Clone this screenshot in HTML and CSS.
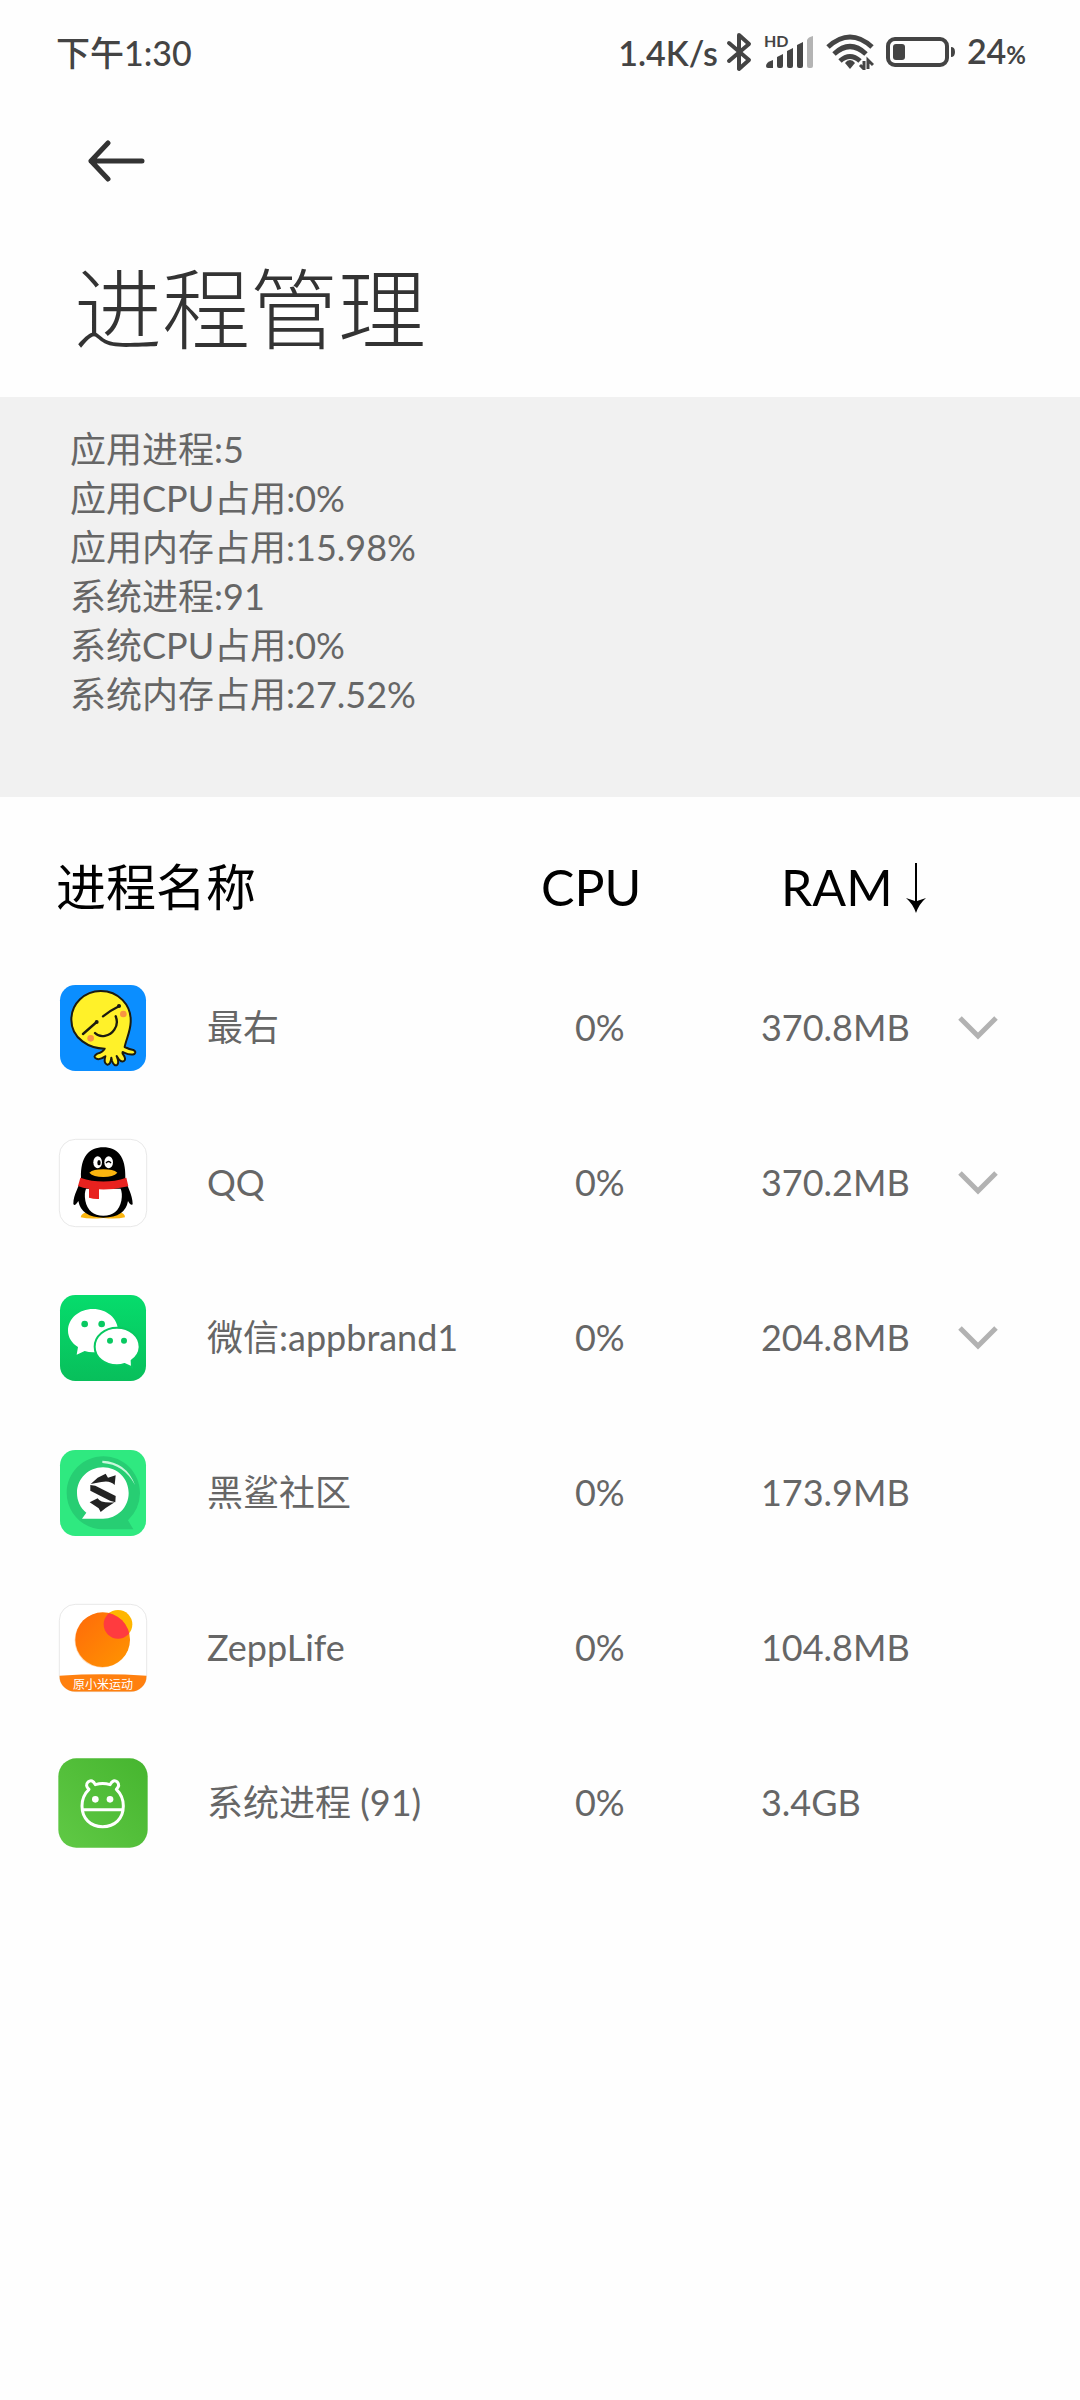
FILE: index.html
```html
<!DOCTYPE html>
<html lang="zh-CN">
<head>
    <meta charset="UTF-8">
    <meta name="viewport" content="width=device-width, initial-scale=1.0">
    <title>进程管理</title>
    <link rel="stylesheet" href="styles.css">
</head>
<body>
    <div class="status-bar">
        <span class="status-time">下午1:30</span>
        <div class="status-icons">
            <span class="net-speed">1.4K/s</span>
            <svg class="icon-bluetooth" width="26" height="40" viewBox="0 0 26 40" fill="none" stroke="#444" stroke-width="4" stroke-linejoin="round" stroke-linecap="round">
                <path d="M3 11l20 17-10 9V3l10 9L3 29"/>
            </svg>
            <svg class="icon-signal" width="50" height="46" viewBox="0 -6 50 46" fill="#444">
                <text class="hd-text" x="0" y="12">HD</text>
                <path d="M2 31q0-4 7-6v8H4q-2 0-2-2z"/>
                <path d="M13 22l6-3v12q0 2-2 2h-2q-2 0-2-2z"/>
                <path d="M23 16l6-3v18q0 2-2 2h-2q-2 0-2-2z"/>
                <path d="M33 10l6-3v24q0 2-2 2h-2q-2 0-2-2z"/>
                <path fill="#b4b4b4" d="M43 5q1-3 6-4v30q0 2-2 2h-2q-2 0-2-2z"/>
            </svg>
            <svg class="icon-wifi" width="48" height="36" viewBox="0 0 48 36" fill="none" stroke="#444" stroke-width="5">
                <path d="M2 13Q24-7 46 13M8 20q16-15 32 0M14 27q10-9 20 0"/>
                <path fill="#444" stroke="none" d="M24 26q3 0 5 3l-5 6-5-6q2-3 5-3z"/>
                <path stroke-width="3" d="M38 27v8l-4-4M42 35v-9l5 5"/>
            </svg>
            <svg class="icon-battery" width="69" height="30" viewBox="0 0 69 30">
                <rect x="2" y="2" width="59" height="26" rx="7" fill="none" stroke="#444" stroke-width="4"/>
                <rect x="7" y="7" width="12" height="16" rx="3" fill="#444"/>
                <path fill="#444" d="M65 10q4 0 4 5t-4 5z"/>
            </svg>
            <span>24<small>%</small></span>
        </div>
    </div>

    <header class="page-header">
        <button class="back-btn" type="button" aria-label="返回">
            <svg width="58" height="42" viewBox="0 0 58 42" fill="none" stroke="#333" stroke-width="5" stroke-linecap="round" stroke-linejoin="round">
                <path d="M54 21H3M20 3L3 21l17 18"/>
            </svg>
        </button>
        <h1>进程管理</h1>
    </header>

    <section class="summary">
        <p>应用进程:5</p>
        <p>应用CPU占用:0%</p>
        <p>应用内存占用:15.98%</p>
        <p>系统进程:91</p>
        <p>系统CPU占用:0%</p>
        <p>系统内存占用:27.52%</p>
    </section>

    <table class="process-table">
        <colgroup>
            <col class="col-icon">
            <col>
            <col class="col-cpu">
            <col class="col-ram">
            <col class="col-toggle">
        </colgroup>
        <thead>
            <tr>
                <th class="name-head" colspan="2">进程名称</th>
                <th>CPU</th>
                <th class="ram-head" colspan="2">
                    <button class="sort-btn" type="button">RAM
                        <svg width="22" height="50" viewBox="0 0 22 50">
                            <path d="M10 0h2v38l9-3q-7 6-10 15Q8 41 1 35l9 3z"/>
                        </svg>
                    </button>
                </th>
            </tr>
        </thead>
        <tbody>
            <tr>
                <td class="app-icon">
                    <svg width="90" height="90" viewBox="24 24 270 270">
                        <rect x="30" y="30" width="258" height="258" rx="46" fill="#0b8eff"/>
                        <g stroke="#1b1b10" stroke-width="6" stroke-linejoin="round" stroke-linecap="round" fill="#fff129">
                            <path d="M164 221C120 221 64 192 64 134C64 86 104 48 152 48C205 48 245 90 242 142C241 170 228 194 224 216Q240 224 250 225Q260 230 253 237Q242 242 222 233Q216 228 218 236Q230 253 222 258Q214 263 206 252L200 243Q208 262 202 269Q193 276 186 258L184 248Q182 270 172 269Q160 266 166 244Q148 256 139 251Q127 245 142 236Q158 231 164 221z"/>
                        </g>
                        <circle cx="122" cy="190" r="10" fill="#f79442"/>
                        <circle cx="220" cy="117" r="10" fill="#f79442"/>
                        <g fill="none" stroke="#1b1b10" stroke-width="7" stroke-linecap="round">
                            <path d="M99 177L140 141M159 124Q180 107 208 93M135 174C150 190 180 184 193 164Q206 145 197 124"/>
                        </g>
                        <circle cx="140" cy="141" r="6" fill="#1b1b10"/>
                        <circle cx="207" cy="93" r="6" fill="#1b1b10"/>
                    </svg>
                </td>
                <td>最右</td>
                <td class="cpu">0%</td>
                <td>370.8MB</td>
                <td>
                    <button class="toggle-btn" type="button" aria-label="展开最右">
                        <svg width="40" height="26" viewBox="0 0 40 26"><path d="M2 3l18 18L38 3"/></svg>
                    </button>
                </td>
            </tr>
            <tr>
                <td class="app-icon">
                    <svg width="90" height="90" viewBox="24 24 270 270">
                        <rect x="28" y="28" width="262" height="262" rx="48" fill="#fff" stroke="#dcdcdc" stroke-width="2"/>
                        <path fill="#fbb50f" d="M92 262Q94 248 115 246h90Q225 248 225 262Q200 268 160 264Q118 268 92 262z"/>
                        <path d="M93 144C91 80 118 52 160 52S228 80 226 144C229 166 248 194 248 222Q244 230 234 213Q226 262 160 263Q94 262 85 213Q73 232 70 221C70 194 88 170 93 144z"/>
                        <path fill="#fff" d="M108 176H212Q218 190 214 212Q205 256 160 257Q115 256 106 212Q102 190 108 176z"/>
                        <path fill="#e8221f" d="M91 143Q160 166 229 143L235 169Q190 180 147 178V207Q132 208 117 203V176Q98 174 84 168z"/>
                        <ellipse cx="143" cy="97" rx="13" ry="18" fill="#fff"/>
                        <ellipse cx="176" cy="97" rx="13" ry="18" fill="#fff"/>
                        <ellipse cx="147" cy="98" rx="5" ry="8"/>
                        <path d="M168 99q8-9 15 0" fill="none" stroke="#000" stroke-width="4"/>
                        <path fill="#fbb50f" d="M118 128Q130 118 160 118T202 128Q190 141 160 141T118 128z"/>
                    </svg>
                </td>
                <td>QQ</td>
                <td class="cpu">0%</td>
                <td>370.2MB</td>
                <td>
                    <button class="toggle-btn" type="button" aria-label="展开QQ">
                        <svg width="40" height="26" viewBox="0 0 40 26"><path d="M2 3l18 18L38 3"/></svg>
                    </button>
                </td>
            </tr>
            <tr>
                <td class="app-icon">
                    <svg width="90" height="90" viewBox="24 24 270 270">
                        <defs>
                            <linearGradient id="wechat" x2="0" y2="1">
                                <stop stop-color="#06dc6c"/>
                                <stop offset="1" stop-color="#08bf5b"/>
                            </linearGradient>
                        </defs>
                        <rect x="30" y="30" width="258" height="258" rx="46" fill="url(#wechat)"/>
                        <path fill="#fff" d="M129 72C171 72 204 101 204 137S171 202 129 202Q116 202 104 198L80 209L84 186C66 175 54 157 54 137C54 101 87 72 129 72z"/>
                        <path fill="#fff" stroke="#08c961" stroke-width="6" d="M201 128C239 128 269 153 269 186Q268 210 245 227L246 247L224 237Q213 241 201 241C164 241 134 217 134 185S164 128 201 128z"/>
                        <g fill="#08c961">
                            <circle cx="104" cy="117" r="10"/>
                            <circle cx="155" cy="117" r="10"/>
                            <circle cx="180" cy="167" r="9"/>
                            <circle cx="222" cy="167" r="9"/>
                        </g>
                    </svg>
                </td>
                <td>微信:appbrand1</td>
                <td class="cpu">0%</td>
                <td>204.8MB</td>
                <td>
                    <button class="toggle-btn" type="button" aria-label="展开微信">
                        <svg width="40" height="26" viewBox="0 0 40 26"><path d="M2 3l18 18L38 3"/></svg>
                    </button>
                </td>
            </tr>
            <tr>
                <td class="app-icon">
                    <svg width="90" height="90" viewBox="24 24 270 270">
                        <rect x="30" y="30" width="258" height="258" rx="46" fill="#2fe980"/>
                        <path fill="#27ce73" d="M160 49C221 49 270 98 270 159Q269 207 234 241L250 268H160C99 268 50 219 50 159S99 49 160 49z"/>
                        <path fill="#fff" d="M159 82C202 82 236 116 236 159S202 236 159 236H96L109 218C91 204 81 182 81 159C81 116 116 82 159 82z"/>
                        <path fill="#c8f8dc" d="M157 62Q229 65 255 135Q222 73 157 69z"/>
                        <g fill="#222">
                            <path d="M167 101L174 113L197 106L194 135Q180 120 154 126L122 132L143 113z"/>
                            <path d="M121 135L136 137L197 168L196 187L180 182L121 152z"/>
                            <path d="M119 187L143 175Q150 190 194 187L167 204L152 216L146 205z"/>
                        </g>
                    </svg>
                </td>
                <td>黑鲨社区</td>
                <td class="cpu">0%</td>
                <td>173.9MB</td>
                <td></td>
            </tr>
            <tr>
                <td class="app-icon">
                    <svg width="90" height="90" viewBox="24 24 270 270">
                        <defs>
                            <linearGradient id="zepp" x2="1" y2="1">
                                <stop stop-color="#ff6a0a"/>
                                <stop offset="1" stop-color="#ff9500"/>
                            </linearGradient>
                            <clipPath id="zepp-sun"><circle cx="158" cy="134" r="82"/></clipPath>
                            <clipPath id="zepp-card"><rect x="28" y="28" width="262" height="262" rx="48"/></clipPath>
                        </defs>
                        <rect x="28" y="28" width="262" height="262" rx="48" fill="#fff" stroke="#dcdcdc" stroke-width="2"/>
                        <circle cx="156" cy="136" r="82" fill="#ff9a3c" opacity=".4"/>
                        <circle cx="204" cy="88" r="43" fill="#ffb600"/>
                        <circle cx="158" cy="134" r="82" fill="url(#zepp)"/>
                        <circle cx="204" cy="88" r="43" fill="#ff3b3f" clip-path="url(#zepp-sun)"/>
                        <path fill="#ff800f" clip-path="url(#zepp-card)" d="M28 242Q160 234 290 242V290H28z"/>
                        <text class="zepp-text" x="69" y="282">原小米运动</text>
                    </svg>
                </td>
                <td>ZeppLife</td>
                <td class="cpu">0%</td>
                <td>104.8MB</td>
                <td></td>
            </tr>
            <tr>
                <td class="app-icon">
                    <svg width="90" height="90" viewBox="24 24 270 270">
                        <defs>
                            <linearGradient id="system" x1="1" x2="0" y2="1">
                                <stop stop-color="#46b52f"/>
                                <stop offset="1" stop-color="#60c945"/>
                            </linearGradient>
                        </defs>
                        <rect x="25" y="25" width="268" height="268" rx="54" fill="url(#system)"/>
                        <g fill="none" stroke="#fff" stroke-width="9" stroke-linejoin="round">
                            <path d="M117 118Q104 106 114 96Q127 86 136 104Q158 97 180 104Q190 86 202 96Q211 106 199 118Q220 138 220 168C220 206 194 230 158 230S96 206 96 168Q96 138 117 118zM97 179H219"/>
                        </g>
                        <circle cx="136" cy="148" r="10" fill="#fff"/>
                        <circle cx="180" cy="148" r="10" fill="#fff"/>
                    </svg>
                </td>
                <td>系统进程 (91)</td>
                <td class="cpu">0%</td>
                <td>3.4GB</td>
                <td></td>
            </tr>
        </tbody>
    </table>
</body>
</html>
```

FILE: styles.css
```css
* {
    margin: 0;
    padding: 0;
    box-sizing: border-box;
}

body {
    font-family: Lato, "Noto Sans CJK SC", sans-serif;
    font-size: 36px;
    line-height: 49px;
    color: #666;
    background: #fefefe;
    min-height: 100vh;
}

svg {
    display: block;
    flex-shrink: 0;
}

button {
    font: inherit;
    color: inherit;
    background: none;
    border: none;
    cursor: pointer;
}

/* status bar */
.status-bar {
    display: flex;
    justify-content: space-between;
    align-items: center;
    height: 104px;
    padding: 0 54px 0 56px;
    font-size: 34px;
    font-weight: 600;
    color: #444;
}

.status-time {
    font-weight: 500;
}

.status-icons {
    display: flex;
    align-items: center;
    gap: 12px;
}

.net-speed {
    margin-right: -4px;
}

.status-icons small {
    font-size: 24px;
    font-weight: 700;
}

.hd-text {
    font-size: 16px;
    font-weight: 700;
}

/* header */
.page-header {
    padding: 36px 74px 25px;
    color: #333;
}

.back-btn {
    display: block;
    padding: 0 14px;
}

.page-header h1 {
    margin-top: 62px;
    font-size: 88px;
    font-weight: 300;
    line-height: 128px;
}

/* totals */
.summary {
    min-height: 400px;
    padding: 28px 70px;
    background: #f1f1f1;
}

/* process list */
.process-table {
    width: 100%;
    table-layout: fixed;
    border-collapse: collapse;
}

.col-icon {
    width: 207px;
}

.col-cpu {
    width: 220px;
}

.col-ram {
    width: 197px;
}

.col-toggle {
    width: 122px;
}

.process-table th {
    height: 153px;
    padding-top: 28px;
    font-size: 50px;
    font-weight: 400;
    text-align: left;
    color: #000;
}

.process-table .name-head {
    padding-left: 56px;
}

.process-table .ram-head {
    padding-left: 20px;
}

.sort-btn {
    display: flex;
    align-items: center;
    gap: 12px;
}

.process-table td {
    height: 155px;
}

.process-table .app-icon {
    padding-left: 58px;
}

.process-table .cpu {
    padding-left: 34px;
}

.toggle-btn path {
    fill: none;
    stroke: #b2b2b2;
    stroke-width: 5;
}

.zepp-text {
    font-size: 36px;
    fill: #fff;
}
```
